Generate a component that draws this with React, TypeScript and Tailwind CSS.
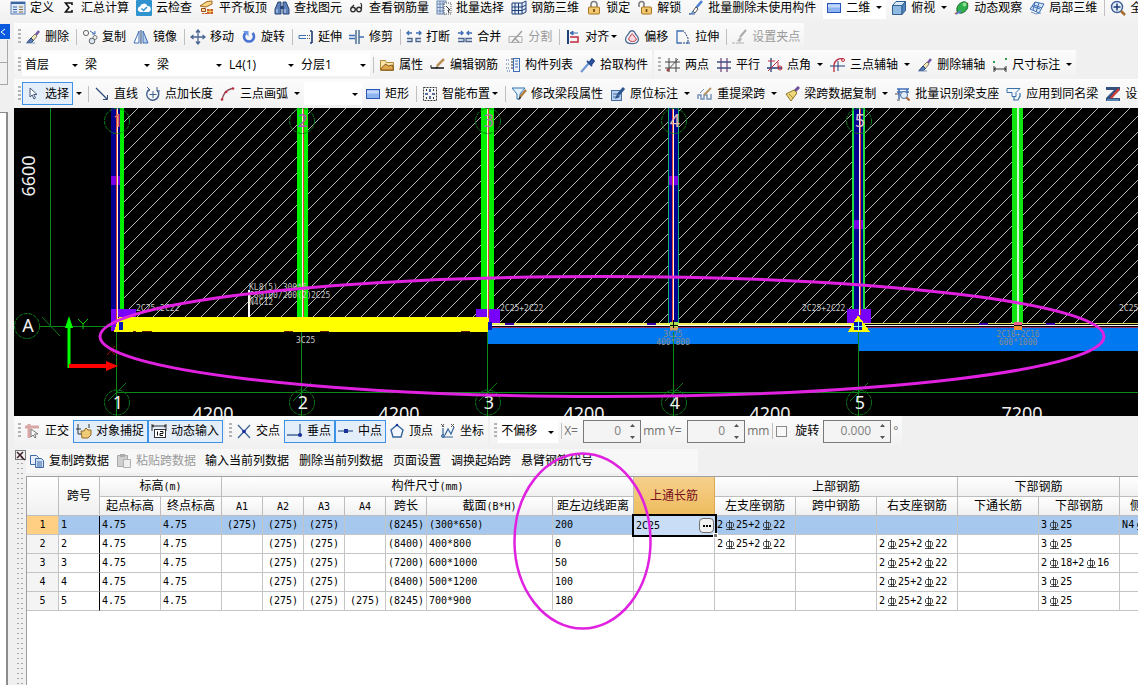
import type { ReactNode } from 'react'

const NAVY = '#1f3f77'
const BLUE = '#3f6fb5'
const RED = '#c0283c'

/* 16x16 toolbar drawings */
const icons = {
  define: (
    <>
      <rect x="1" y="2" width="14" height="12" fill="#dfe9f7" stroke="#5b7fb5" />
      <path d="M1 3h14" stroke="#3b64a5" strokeWidth="2" />
      <path d="M3 7h4M3 9.500h4M3 12h4" stroke="#3b64a5" />
      <path d="M9 7h4M9 9.500h4M9 12h4" stroke="#8a6a30" />
    </>
  ),
  sigma: <path d="M11 5V3H4.500L8 7.500 4.500 12H11v-2" stroke="#111" strokeWidth="1.600" />,
  cloud: (
    <>
      <rect width="16" height="16" rx="1" fill="#2f93cf" />
      <path d="M4 12a2.800 2.800 0 0 1 0-5.500A4 4 0 0 1 11.500 6 3 3 0 0 1 12 12z" fill="#fff" />
      <path d="m5.500 8.500 2 2L11 7" stroke="#2f93cf" strokeWidth="1.500" />
    </>
  ),
  roof: (
    <>
      <path d="M1 6 8 1.500 13 1v3L7 7z" fill="#f9d683" stroke="#a2671a" />
      <path d="M2.500 8.500h4v3h-4z" fill="#fbe3a8" stroke="#9a4a18" />
      <path d="M3 13h5V9h6v5H3z" fill="#c9602c" />
      <path d="M8 11.500h6M11 9v5M5.500 13v1" stroke="#f3c35c" />
    </>
  ),
  binoculars: (
    <>
      <path d="M4 2h3v12H1V9zM9 2h3l3 7v5H9z" fill="#5c80b8" stroke="#2a4777" />
      <path d="M6 6h4v3H6z" fill="#2a4777" />
      <path d="M3 9v4M11 9v4" stroke="#c9d9f2" />
    </>
  ),
  glasses: (
    <>
      <circle cx="4" cy="9.500" r="2.300" stroke="#333" strokeWidth="1.400" />
      <circle cx="10" cy="9.500" r="2.300" stroke="#333" strokeWidth="1.400" />
      <path d="M12.500 9V4.500L11.500 3M6.500 9H8M2 8l3-3" stroke="#333" strokeWidth="1.200" />
    </>
  ),
  batch: (
    <>
      <rect x="1" y="1" width="9" height="13" fill="#dbe6f6" stroke="#6b86b0" />
      <path d="M1 4h9M1 7.500h9M1 11h9M4 1v13M7 1v13" stroke="#6b86b0" />
      <path d="M8 3h7v11H8z" stroke="#555" strokeDasharray="1 1" fill="#f4f6fa" />
      <path d="m10 6 4 4h-2l1 3" stroke="#333" />
    </>
  ),
  grid3d: (
    <>
      <path d="M1 3h10l4-2v11l-4 2H1z" fill="#e3ecf8" stroke={NAVY} />
      <path d="M4 3v11M7.500 3v11M11 3v11M1 7h10l4-2M1 10.500h10l4-2" stroke={NAVY} />
    </>
  ),
  lock: (
    <>
      <path d="M5 7V4.500a3 3 0 0 1 6 0V7" stroke="#7f7f7f" strokeWidth="1.600" />
      <rect x="2.500" y="7" width="11" height="7" rx="1" fill="#f2c870" stroke="#a5741c" />
      <path d="M8 9v3" stroke="#6a4508" strokeWidth="1.600" />
    </>
  ),
  unlock: (
    <>
      <path d="M2 7V4a2.500 2.500 0 0 1 5 0v3" stroke="#7f7f7f" strokeWidth="1.600" />
      <rect x="4.500" y="7" width="10" height="7" rx="1" fill="#f2c870" stroke="#a5741c" />
      <path d="M9.500 9v3" stroke="#6a4508" strokeWidth="1.600" />
    </>
  ),
  brush: (
    <>
      <path d="m14 1-6 7" stroke="#4b7fd0" strokeWidth="2.500" />
      <path d="m8 7-3 4 2 2 3-4z" fill="#fff" stroke="#555" />
      <path d="M5 11c-1 2-2 3-4 3h6" fill="#8fb2e0" stroke="#3d66a8" />
    </>
  ),
  rect: (
    <>
      <rect x="1.500" y="3.500" width="13" height="9" fill="#8fb4f2" stroke="#2a55b8" />
      <path d="M2 6h12" stroke="#c4d8fb" strokeWidth="3" />
    </>
  ),
  cube: (
    <>
      <path d="M1.500 5.500 5 1.500h9.500L11 5.500z" fill="#d7eafa" stroke="#31608f" />
      <path d="M1.500 5.500H11v9H1.500z" fill="#8fbbe2" stroke="#31608f" />
      <path d="m11 5.500 3.500-4v9l-3.500 4z" fill="#4f86bb" stroke="#31608f" />
    </>
  ),
  orbit: (
    <>
      <path d="M1 14 14 3" stroke="#c7501e" strokeWidth="1.500" />
      <path d="M3 11C2 7 5 3 9 2s6 3 4 7-8 6-10 2z" fill="#2fae4c" stroke="#15682a" />
      <circle cx="10.500" cy="4.500" r="2" fill="#8be08f" />
      <path d="m2 14 5-3" stroke="#5b7fd0" strokeWidth="2" />
    </>
  ),
  local3d: (
    <>
      <path d="m1 9 5-7 9 2-5 9z" fill="#d4e5f6" stroke={BLUE} />
      <path d="m3 6 8 3M6 2l-2 8M10 3l-3 9M13 8 5 5" stroke={BLUE} />
      <path d="m2 12 5 2 5-1" stroke="#7394bd" />
    </>
  ),
  zoomAll: (
    <>
      <circle cx="7" cy="7" r="5.500" fill="#e5effb" stroke="#3f5f95" strokeWidth="1.400" />
      <path d="M7 3.500v7M3.500 7h7" stroke={NAVY} strokeWidth="1.500" />
      <path d="m11 11 4 4" stroke="#a36a2a" strokeWidth="2.500" />
    </>
  ),
  eraser: (
    <>
      <path d="m14 2-4 5" stroke="#7557a8" strokeWidth="2.600" />
      <path d="m10 5-4 4 2.500 2.500L12 7z" fill="#f4e9b0" stroke="#777" />
      <path d="M2 13.500 6 9l2.500 2.500-2 2z" fill="#5a7cb8" stroke="#26406e" />
      <path d="M1 14h9" stroke="#7b95bd" />
    </>
  ),
  copy: (
    <>
      <circle cx="4" cy="4" r="2.600" stroke="#666" />
      <circle cx="10" cy="12" r="2.800" fill="#dbe7f7" stroke="#666" />
      <circle cx="13" cy="8.500" r="2" stroke="#777" />
      <path d="m8 2 5 3m0 0V2m0 3h-3" stroke={BLUE} />
    </>
  ),
  mirror: (
    <>
      <path d="M6 2v12H1z" fill="#fff" stroke={BLUE} />
      <path d="M10 2v12h5z" fill="#b9d0ef" stroke={BLUE} />
      <path d="M8 1v14" stroke={NAVY} />
    </>
  ),
  move: (
    <path
      d="M8 1v14M1 8h14M6 3.500 8 1l2 2.500M6 12.500 8 15l2-2.500M3.500 6 1 8l2.500 2M12.500 6 15 8l-2.500 2"
      stroke="#4a6690"
      strokeWidth="1.300"
    />
  ),
  rotate: (
    <>
      <path d="M4.500 4a5 5 0 1 0 7 0" stroke="#4a72d0" strokeWidth="2.600" />
      <path d="M2 2h5.500v5.500z" fill="#6d95e8" />
    </>
  ),
  extend: (
    <>
      <path d="M1 6.500h7M1 9.500h7M1 6.500v3" stroke={BLUE} />
      <path d="M9 6.500h3M9 9.500h3" stroke="#555" strokeDasharray="1 1" />
      <path d="M14 2v12M12 2h2M12 14h2" stroke={NAVY} strokeWidth="1.600" />
    </>
  ),
  trim: (
    <>
      <path d="M0 6.500h6M0 9.500h6M10 8h5" stroke={BLUE} strokeWidth="1.300" />
      <path d="M7 1v14M10 1v14" stroke="#4c7094" strokeWidth="1.500" />
    </>
  ),
  break: (
    <>
      <path d="M1 4h5M10 4h5M3 2 1 4l2 2M13 2l2 2-2 2" stroke={BLUE} strokeWidth="1.400" />
      <path d="M1 9.500h5v3H1M15 9.500h-5v3h5" stroke="#47658f" strokeWidth="1.300" />
    </>
  ),
  merge: (
    <>
      <path d="M1 4h5M10 4h5M4 2l2 2-2 2M12 2l-2 2 2 2" stroke={BLUE} strokeWidth="1.400" />
      <path d="M1 9.500h6v3H1M15 9.500H9v3h6" stroke="#47658f" strokeWidth="1.300" />
    </>
  ),
  split: (
    <>
      <path d="M1 7.500h13v6H1z" stroke="#b0b0b0" />
      <path d="M4 13 14 2M6 9l5 4" stroke="#a0a0a0" strokeWidth="1.500" />
    </>
  ),
  align: (
    <>
      <path d="M3 1v14" stroke={NAVY} strokeWidth="2" />
      <path d="M5 4h8M5 4l3-2v4z" fill={BLUE} stroke={BLUE} />
      <path d="M5 8h8v5H5" stroke={RED} strokeWidth="1.500" />
    </>
  ),
  offset: (
    <>
      <path d="M2 12C0 8 4 7 5 4s5-3 6 0 5 4 3 8-11 3-12 0z" stroke="#4b6a94" strokeWidth="1.300" />
      <path d="M5 11c-1-2 1-3 2-5s2-1 3 1 3 2 2 4-6 2-7 0z" fill="#f7d8dc" stroke={RED} />
    </>
  ),
  stretch: (
    <>
      <path d="M7 2H2v12h4" stroke={BLUE} strokeWidth="1.300" />
      <path d="M7 2h2l4 7v5H6" stroke={NAVY} strokeDasharray="2 1" />
      <path d="M11 14h4" stroke={BLUE} strokeWidth="1.300" />
    </>
  ),
  gripPoint: (
    <>
      <path d="M14 1 8 8" stroke="#aaa" strokeWidth="2" />
      <path d="m8 8-3 4 3 1 2-3z" fill="#b5b5b5" />
      <path d="M0 14h3M4 14h8" stroke="#b0b0b0" />
    </>
  ),
  props: (
    <>
      <path d="M1.500 3.500h5l1 2h7v8h-13z" fill="#f7e3a5" stroke="#b08a3a" />
      <path d="m1.500 12 5-5 3 2 4-1 1 5h-11z" fill="#e2a94c" stroke="#80551c" />
    </>
  ),
  editRebar: (
    <>
      <path d="M1 11h13" stroke="#222" strokeWidth="1.600" />
      <path d="M1 8v3" stroke="#222" />
      <path d="m14 2-7 7" stroke="#b9935a" strokeWidth="2.500" />
      <path d="m7 9-2 3 3-1z" fill="#222" />
    </>
  ),
  list: (
    <>
      <path d="M1 3h3M1 7h3M1 11h3M2 14h3" stroke={BLUE} strokeDasharray="1 1" />
      <path d="M6 2h2M6 5h2M6 8h2M6 11h2" stroke="#333" />
      <rect x="8.500" y="1.500" width="6" height="13" fill="#eef3fb" stroke={BLUE} />
      <path d="M10 4h3M10 7h3M10 10h3" stroke={BLUE} />
    </>
  ),
  pick: (
    <>
      <path d="m9 6-7 8-1 1" stroke="#6f97d5" strokeWidth="2.200" />
      <path d="m7 4 5 5M9 6l3-4 2 2-3 4z" fill="#2f5cab" stroke="#234a90" strokeWidth="1.800" />
    </>
  ),
  twoPoint: (
    <>
      <path d="M4 1v14M11 1v14M0 5h15M0 11h15" stroke="#444" />
      <path d="M2 14 13 2" stroke="#555" />
      <circle cx="3" cy="13" r="1.500" fill="#9c4040" />
    </>
  ),
  parallel: (
    <>
      <path d="M5 1v14M11 1v14" stroke="#7a4d80" strokeWidth="1.300" />
      <path d="M1 5h14M1 11h14" stroke="#3f4f80" strokeWidth="1.300" />
    </>
  ),
  pointAngle: (
    <>
      <path d="M4 1v14M0 11h15" stroke={NAVY} strokeWidth="1.300" />
      <path d="M1 14 12 3M1 4h7" stroke={RED} />
      <path d="M11 5v6" stroke={RED} />
      <circle cx="13" cy="11" r="2" stroke={RED} />
    </>
  ),
  arcAux: (
    <>
      <path d="M4 15V8a7 7 0 0 1 9-6" stroke={RED} strokeWidth="1.300" />
      <path d="M0 9h15M8 4v10" stroke={NAVY} />
      <circle cx="13" cy="3" r="1.500" stroke={RED} />
    </>
  ),
  dim: (
    <>
      <path d="M2 9v6M14 9v6M2 12h12M4 10.500 2 12l2 1.500M12 10.500l2 1.500-2 1.500" stroke="#333" />
      <path d="M1 5h2M13 2h2" stroke="#2d9a45" strokeWidth="2" />
    </>
  ),
  cursor: <path d="M5 2v9l2.200-2 1.800 4 1.500-1-1.800-3.500H12z" fill="#fff" stroke="#44597a" />,
  line: (
    <>
      <path d="m2 2 11 11" stroke="#2d4c7a" strokeWidth="1.300" />
      <path d="M13.500 13.500V9M13.500 13.500H9" stroke="#2d4c7a" />
    </>
  ),
  pointLen: (
    <>
      <path d="M4 3.500a6 6 0 1 0 8 .5" stroke="#3f5e8c" strokeWidth="1.400" />
      <path d="M8 5v7M4.500 8.500h7M2 1l3 3-3 2M12 1v4h3" stroke="#3f5e8c" />
    </>
  ),
  arc: (
    <>
      <path d="M2 14C3 8 6 4 12 2.500" stroke="#8b4a55" strokeWidth="1.300" />
      <circle cx="2" cy="13.500" r="1.300" fill={RED} />
      <circle cx="6" cy="6" r="1.300" fill={RED} />
      <circle cx="13" cy="2.500" r="1.300" fill={RED} />
    </>
  ),
  smart: (
    <>
      <rect x="1.500" y="1.500" width="13" height="13" stroke="#333" strokeDasharray="2 1" />
      <path d="M8 3v3M8 10v3M3 8h3M10 8h3" stroke={NAVY} strokeWidth="1.500" />
      <path d="M4 4h1M11 4h1M4 12h1M11 12h1" stroke="#333" strokeWidth="2" />
    </>
  ),
  modify: (
    <>
      <path d="M1 2h13l-5 6v5H6V8z" fill="#e2f0fb" stroke="#2f74b5" />
      <path d="m15 4-6 7" stroke="#b07a35" strokeWidth="2.300" />
      <path d="m9 10-2 4 3-2z" fill="#222" />
    </>
  ),
  situ: (
    <>
      <rect x="1.500" y="4.500" width="10" height="10" fill="#b9d0ee" stroke="#446c9f" />
      <path d="M3 8h4M3 11h3" stroke="#446c9f" />
      <path d="m14 2-6 7" stroke="#2c5590" strokeWidth="3" />
      <path d="m7 8-2 5 5-2z" fill="#2c5590" />
    </>
  ),
  respan: (
    <>
      <path d="M1 13V9h3v4h3V9h3v4h4V8" stroke="#7291b8" strokeWidth="1.400" />
      <path d="m14 2-7 7" stroke="#b79466" strokeWidth="2" />
      <path d="m3 7 4-4" stroke="#7291b8" />
    </>
  ),
  sweep: (
    <>
      <path d="m15 1-5 5" stroke="#6d4f9a" strokeWidth="3" />
      <path d="m10 4-8 4 5 7 6-8z" fill="#ecd67a" stroke="#8d7524" />
      <path d="m5 8 4 4" stroke="#a98d34" />
    </>
  ),
  identify: (
    <>
      <path d="M2 3h12M2 6h12M4 3v10M12 3v4" stroke={BLUE} strokeWidth="1.500" />
      <circle cx="9" cy="9" r="3.500" fill="#e3eefb" stroke="#46709f" />
      <path d="m11.500 11.500 3 3" stroke="#a7622d" strokeWidth="2" />
      <path d="M0 8h4M2 14h3" stroke="#555" />
    </>
  ),
  apply: (
    <>
      <path d="M1 2.500h13l-4 4v4H6v-4H1z" fill="#f4f8fd" stroke="#3a70a8" />
      <path d="M8 11v3h4l2-4M14 7v4" stroke="#3a70a8" strokeWidth="1.200" />
    </>
  ),
  settings: (
    <>
      <path d="M1 1h14v3L6 12h9v3H1v-3l8-8H1z" fill="#34507c" />
      <path d="m14 3-8 9" stroke="#d23b35" strokeWidth="2.200" />
      <path d="M2 14h12" stroke="#7db7e5" />
    </>
  ),
  ortho: (
    <>
      <path d="M4 1v14M0 4h14" stroke="#d9a6a6" strokeWidth="3" />
      <path d="M6 6v8l2-2 2 3 1-1-1.500-3H13z" fill="#fff" stroke="#777" />
    </>
  ),
  snap: (
    <>
      <path d="M2 1v10M0 6h5M2 11h3M13 1v4" stroke="#333" />
      <path d="M5 8h3l2-3 2 2h3v5l-3 3H6z" fill="#efcb78" stroke="#8f6a20" />
    </>
  ),
  dynamic: (
    <>
      <path d="M1 1v7M15 1v7M1 3h14M3 2 1 3l2 1M13 2l2 1-2 1" stroke="#333" />
      <rect x="3.500" y="6.500" width="11" height="8" fill="#fff" stroke="#333" />
      <path d="M6.500 8.500v4M9 8.500h3v2H9v2h3" stroke="#111" />
    </>
  ),
  cross: (
    <>
      <path d="m2 2 12 13M14 2 2 15" stroke="#3f6796" strokeWidth="1.300" />
      <circle cx="8" cy="8.500" r="1.800" fill="#1d2f9c" />
    </>
  ),
  perp: (
    <>
      <path d="M13 1v11M0 12h15" stroke="#3f6796" strokeWidth="1.300" />
      <circle cx="13" cy="12" r="2" fill="#1d2f9c" />
    </>
  ),
  mid: (
    <>
      <path d="M0 8h15" stroke="#3f6796" strokeWidth="1.300" />
      <rect x="6" y="6" width="4" height="4" fill="#1d2f9c" />
    </>
  ),
  vertex: (
    <>
      <path d="m8 2 6 5-2 7H4L2 7z" fill="#f5f9ff" stroke="#35659c" strokeWidth="1.400" />
      <circle cx="8" cy="2" r="1.200" fill="#1d2f9c" />
    </>
  ),
  coord: (
    <>
      <path d="M3 5v9h10M5 12l3-6 3 5 3-7" stroke="#35659c" strokeWidth="1.200" />
      <path d="m1 1 3 3M4 1 2 4M11 1l3 3M14 1l-3 3" stroke="#555" />
      <circle cx="3" cy="13" r="1.500" stroke="#35659c" />
    </>
  ),
  copyDoc: (
    <>
      <path d="M1.500 2.500h6l2 2v7h-8z" fill="#e8f0fb" stroke="#3e68a8" />
      <path d="M6.500 5.500h6l2 2v7h-8z" fill="#cfe0f6" stroke="#3e68a8" />
      <path d="M8 9h5M8 11h5M8 13h5" stroke="#3e68a8" />
    </>
  ),
  pasteDoc: (
    <>
      <path d="M1.500 2.500h10v11h-10z" fill="#cfcfcf" stroke="#aaa" />
      <path d="M4 1h5v3H4z" fill="#aaa" />
      <path d="M7.500 6.500h7v8h-7z" fill="#eee" stroke="#b0b0b0" />
    </>
  ),
}

type IconName = keyof typeof icons

function Icon({ name }: { name: IconName }) {
  return (
    <svg className="size-4 shrink-0" viewBox="0 0 16 16" fill="none" aria-hidden="true">
      {icons[name]}
    </svg>
  )
}

function Caret({ className }: { className?: string }) {
  return (
    <svg className={`h-[3px] w-[6px] shrink-0 ${className ?? ''}`} viewBox="0 0 6 3" aria-hidden="true">
      <path d="M0 0h6L3 3z" fill="#000" />
    </svg>
  )
}

type ToolProps = {
  icon: IconName
  label: string
  menu?: 'wide' | 'tight'
  pressed?: boolean
  disabled?: boolean
}

function Tool({ icon, label, menu, pressed, disabled }: ToolProps) {
  return (
    <button
      type="button"
      disabled={disabled}
      aria-pressed={pressed}
      className={`flex h-[23px] shrink-0 items-center border pl-[2px] pr-[3px] ${
        pressed ? 'border-[#3c92e6] bg-[#e4eefa]' : 'border-transparent'
      } ${disabled ? 'text-[#9a9a9a]' : 'text-black'}`}
    >
      <Icon name={icon} />
      <span className="ml-1">{label}</span>
      {menu === 'wide' && <Caret className="ml-[6px]" />}
      {menu === 'tight' && <Caret className="ml-[2px]" />}
    </button>
  )
}

function Sep() {
  return <div className="ml-[3px] mr-[2px] h-4 w-px shrink-0 bg-[#c0c0c0]" />
}

function Grip() {
  return (
    <div className="mr-px h-4 w-[3px] shrink-0 bg-[linear-gradient(#b4b4b4_50%,transparent_50%)] bg-size-[3px_4px]" />
  )
}

function Strip({ children, className }: { children: ReactNode; className?: string }) {
  return (
    <div
      role="toolbar"
      className={`flex h-full shrink-0 items-center bg-linear-to-b from-[#fcfcfc] to-[#f1f1f1] pl-1 ${className ?? ''}`}
    >
      {children}
    </div>
  )
}

function Combo({ label, value, className }: { label: string; value: string; className: string }) {
  return (
    <div className={`relative h-[23px] shrink-0 bg-white ${className}`}>
      <select aria-label={label} className="h-full w-full appearance-none bg-transparent pl-[3px] outline-none">
        <option>{value}</option>
      </select>
      <Caret className="pointer-events-none absolute right-1 top-[11px]" />
    </div>
  )
}

function Spin({ id, value, className }: { id: string; value: string; className: string }) {
  return (
    <div className={`flex h-[23px] shrink-0 items-center border border-[#7a7a7a] bg-[#f4f4f4] ${className}`}>
      <input id={id} defaultValue={value} disabled className="w-0 flex-1 text-right text-[#808080]" />
      <svg className="ml-2 mr-1 h-[15px] w-[7px] shrink-0" viewBox="0 0 7 15" aria-hidden="true">
        <path d="M1 3h5L3.500 0zM1 12h5l-2.500 3z" fill="#555" />
      </svg>
    </div>
  )
}

const axes = [
  { x: 117, name: '1', topColor: '#e06a5a' },
  { x: 302, name: '2', topColor: '#a060b0' },
  { x: 488, name: '3', topColor: '#b078a0' },
  { x: 674, name: '4', topColor: '#e8b8b0' },
  { x: 859, name: '5', topColor: '#d8c0d8' },
]

const bays = [
  [124, 297],
  [308, 481],
  [494, 669],
  [678, 852],
  [865, 1012],
  [1023, 2400],
]

const HATCH_STEP = 16

function Drawing() {
  const hatch = Array.from({ length: 150 }, (_, i) => 246 + i * HATCH_STEP)

  return (
    <svg className="block h-[308px] w-full bg-black" role="img" aria-label="梁平面图">
      <defs>
        <clipPath id="bays">
          {bays.map(([a, b]) => (
            <rect key={a} x={a} y="108" width={b - a} height="215" />
          ))}
        </clipPath>
      </defs>
      <g transform="translate(-14 -108)" fill="none">
        {/* slab hatch */}
        <g clipPath="url(#bays)" stroke="#b8b8b8" shapeRendering="crispEdges">
          {hatch.map((c) => (
            <line key={c} x1={c - 108} y1="108" x2={c - 330} y2="330" />
          ))}
        </g>

        <g shapeRendering="crispEdges">
          {/* vertical beams */}
          <rect x="111" y="108" width="9" height="202" fill="#000090" />
          <rect x="120" y="108" width="4" height="201" fill="#00f000" />
          <rect x="111" y="176" width="9" height="9" fill="#7800e8" />
          <rect x="297" y="108" width="11" height="210" fill="#00f000" />
          <rect x="481" y="108" width="13" height="202" fill="#00f000" />
          <rect x="668" y="108" width="11" height="215" fill="#18b070" />
          <rect x="669" y="108" width="9" height="215" fill="#000090" />
          <rect x="669" y="176" width="9" height="9" fill="#7800e8" />
          <rect x="852" y="108" width="13" height="202" fill="#20e040" />
          <rect x="854" y="108" width="9" height="202" fill="#000090" />
          <rect x="854" y="220" width="9" height="9" fill="#7800e8" />
          <rect x="1012" y="108" width="11" height="215" fill="#10e410" />
          <rect x="1017" y="108" width="2" height="215" fill="#c8f8c8" />

          {/* supports */}
          <path d="M111 309h25v8h-20v14h-5zM476 309h24v15h-24zM847 309h24v15h-24z" fill="#7800f8" />

          {/* span 1 highlighted */}
          <path d="M119 317h370v6l8 9H114z" fill="#ff0" />
          <path d="M133 331.500h3M142 331.500h10M284 331.500h9M320 331.500h9M461 331.500h9" stroke="#602000" />

          {/* remaining spans */}
          <rect x="488" y="328" width="370" height="16" fill="#0078f0" />
          <rect x="858" y="328" width="1500" height="23" fill="#0078f0" />
          <path d="M492 324h366" stroke="#f0f060" strokeWidth="2" />
          <path d="M858 323.500h1500" stroke="#e0e060" />
          <path d="M492 325.500h1866" stroke="#fff" />
          <path d="M492 327.500h1866" stroke="#a03060" />
          <path d="M505 324h9M647 324h9M979 324h9M1046 324h9" stroke="#3800a0" strokeWidth="2" />

          {/* beam centre lines */}
          <path d="M116.500 108v216M303.500 108v209M488.500 108v210M672.500 108v215M860.500 108v207" stroke="#e04030" />
          <path d="M117.500 108v216M302.500 108v209M487.500 108v210M673.500 108v215M859.500 108v207" stroke="#fff4e0" />

          {/* axis lines */}
          <g stroke="#0b8a1a">
            <path d="M50.500 108v218M40 326.500h72M117 392.500h2300" />
            {axes.map((a) => (
              <path key={a.name} d={`M${a.x - 0.5} 332V416`} />
            ))}
          </g>
        </g>

        <g stroke="#0b7a1a">
          <path d="M42 317 60 336" />
          {axes.map((a) => (
            <g key={a.name}>
              <path d={`M${a.x - 9} 401 ${a.x + 9} 383`} />
              <circle cx={a.x} cy="121" r="12.500" strokeDasharray="4 1" />
              <circle cx={a.x} cy="402.500" r="12.500" strokeDasharray="4 1" />
            </g>
          ))}
          <circle cx="27" cy="326" r="12.500" strokeDasharray="4 1" />
        </g>

        {/* joints */}
        <g shapeRendering="crispEdges">
          <rect x="119" y="322" width="4" height="8" fill="#0018b8" />
          <rect x="488" y="322" width="4" height="8" fill="#0018b8" />
          <path d="m858 315 12 17h-22z" fill="#ff0" />
          <rect x="854" y="322" width="8" height="8" fill="#0018b8" />
          <path d="M858.500 321v10M853 326.500h10" stroke="#7ff" />
          <rect x="670" y="322" width="8" height="5" fill="#a8e050" />
          <rect x="670" y="327" width="8" height="3" fill="#d8a060" />
          <path d="M673.500 320v8M670 325.500h8" stroke="#000" />
          <rect x="1014" y="322" width="8" height="3" fill="#f06090" />
          <rect x="1014" y="325" width="8" height="5" fill="#e89030" />
          <path d="M1014 325.500h8" stroke="#000" />
          <rect x="248" y="290" width="2" height="27" fill="#fff" />
        </g>

        {/* UCS */}
        <path d="M69 368v-42" stroke="#0f0" strokeWidth="3" />
        <path d="m69 316 4 12h-8z" fill="#0f0" />
        <path d="M69 366h39" stroke="#f00" strokeWidth="4" />
        <path d="m118 366-12-5v10z" fill="#f00" />
        <path d="m78 319 5 5 5-5M83 324v5" stroke="#0c0" />
        <path d="m107 346 8 9M115 346l-8 9" stroke="#a01010" />

        <g className="font-['DejaVu_Sans_Mono',monospace] text-[8px]" fill="#c8c8c8">
          <text x="249" y="290">KL8(5) 300*6</text>
          <text x="249" y="298">C8@100/200(2)</text>
          <text x="311" y="298">2C25</text>
          <text x="249" y="305">N4C12</text>
          <text x="136" y="311">2C25+2C22</text>
          <text x="500" y="311">2C25+2C22</text>
          <text x="802" y="311">2C25+2C22</text>
          <text x="1119" y="311">2C25+2C22</text>
          <text x="296" y="343">3C25</text>
          <g fill="#8c8c88" textAnchor="middle">
            <text x="673" y="337">3C25</text>
            <text x="673" y="345">400*800</text>
            <text x="1018" y="337">2C18+2C16</text>
            <text x="1018" y="345">600*1000</text>
          </g>
        </g>

        <g className="font-['Noto_Sans',sans-serif] text-[18px]" fill="#f0f0f0" textAnchor="middle">
          <text x="28" y="332">A</text>
          <text transform="translate(35 176) rotate(-90)">6600</text>
          {axes.map((a) => (
            <g key={a.name}>
              <text x={a.x + 1} y="127" fill={a.topColor}>
                {a.name}
              </text>
              <text x={a.x + 1} y="409">
                {a.name}
              </text>
            </g>
          ))}
          <text x="213" y="420">4200</text>
          <text x="399" y="420">4200</text>
          <text x="584" y="420">4200</text>
          <text x="770" y="420">4200</text>
          <text x="1022" y="420">7200</text>
        </g>

        <ellipse cx="602" cy="336.500" rx="502" ry="60" stroke="#e022e0" strokeWidth="3" />
      </g>
    </svg>
  )
}

const rows = [
  { a1: '(275)', a2: '(275)', a3: '(275)', a4: '', len: '(8245)', sec: '(300*650)', dist: '200', top: '2C25', left: '2C25+2C22', right: '', bottom: '3C25', side: 'N4C12' },
  { a1: '', a2: '(275)', a3: '(275)', a4: '', len: '(8400)', sec: '400*800', dist: '0', top: '', left: '2C25+2C22', right: '2C25+2C22', bottom: '3C25', side: '' },
  { a1: '', a2: '(275)', a3: '(275)', a4: '', len: '(7200)', sec: '600*1000', dist: '50', top: '', left: '', right: '2C25+2C22', bottom: '2C18+2C16', side: '' },
  { a1: '', a2: '(275)', a3: '(275)', a4: '', len: '(8400)', sec: '500*1200', dist: '100', top: '', left: '', right: '2C25+2C22', bottom: '3C25', side: '' },
  { a1: '', a2: '(275)', a3: '(275)', a4: '(275)', len: '(8245)', sec: '700*900', dist: '180', top: '', left: '', right: '2C25+2C22', bottom: '3C25', side: '' },
]

/* C in a rebar spec is shown as the HRB400 grade sign */
function Rebar({ spec }: { spec: string }) {
  return (
    <span className="inline-flex items-center whitespace-nowrap">
      {spec.split('C').map((part, i) => (
        <span key={i} className="inline-flex items-center">
          {i > 0 && (
            <svg className="ml-px h-[11px] w-3" viewBox="0 0 12 11" fill="none" stroke="#222" aria-label="C">
              <path d="M4 2.500h4.500l1 1v3l-1 1h-5l-1-1v-3l1-1zM5.500 0v10M7.500 2.500v7.500M2 9.500h9" strokeWidth=".8" />
            </svg>
          )}
          {part}
        </span>
      ))}
    </span>
  )
}

const headCell = 'border-b border-r border-[#bdbdbd] bg-linear-to-b from-white to-[#f0f0f0] p-0 font-normal'

function Th({ children, className, ...rest }: { children?: ReactNode; className?: string; colSpan?: number; rowSpan?: number }) {
  return (
    <th {...rest} className={`${headCell} ${className ?? ''}`}>
      {children}
    </th>
  )
}

function Num({ children }: { children: ReactNode }) {
  return <span className="font-['DejaVu_Sans_Mono',monospace] text-[10px]">{children}</span>
}

function SpanTable() {
  return (
    <table className="w-[1174px] table-fixed border-separate border-spacing-0">
      <colgroup>
        <col className="w-[32px]" />
        <col className="w-[41px]" />
        <col className="w-[61px]" />
        <col className="w-[61px]" />
        <col className="w-[41px]" />
        <col className="w-[41px]" />
        <col className="w-[41px]" />
        <col className="w-[41px]" />
        <col className="w-[41px]" />
        <col className="w-[126px]" />
        <col className="w-[81px]" span={8} />
      </colgroup>
      <thead>
        <tr className="h-[20px]">
          <Th rowSpan={2} />
          <Th rowSpan={2}>跨号</Th>
          <Th colSpan={2}>标高<Num>(m)</Num></Th>
          <Th colSpan={7}>构件尺寸<Num>(mm)</Num></Th>
          <th rowSpan={2} className="border-b border-r border-[#d9a850] bg-linear-to-b from-[#f5d08c] to-[#eebc5c] p-0 font-normal text-[#7a1020]">
            上通长筋
          </th>
          <Th colSpan={3}>上部钢筋</Th>
          <Th colSpan={2}>下部钢筋</Th>
          <Th />
        </tr>
        <tr className="h-[19px]">
          <Th>起点标高</Th>
          <Th>终点标高</Th>
          <Th><Num>A1</Num></Th>
          <Th><Num>A2</Num></Th>
          <Th><Num>A3</Num></Th>
          <Th><Num>A4</Num></Th>
          <Th>跨长</Th>
          <Th>截面<Num>(B*H)</Num></Th>
          <Th>距左边线距离</Th>
          <Th>左支座钢筋</Th>
          <Th>跨中钢筋</Th>
          <Th>右支座钢筋</Th>
          <Th>下通长筋</Th>
          <Th>下部钢筋</Th>
          <Th className="whitespace-nowrap">侧面通长筋</Th>
        </tr>
      </thead>
      <tbody className="font-['DejaVu_Sans_Mono',monospace] text-[10px]">
        {rows.map((row, i) => {
          const cell = 'border-b border-r border-[#c4c4c4] px-[2px] py-0'
          return (
            <tr key={i} className={`h-[19px] ${i === 0 ? 'bg-[#a6c8ee]' : 'bg-white'}`}>
              <th className={`border-b border-r border-[#c4c4c4] p-0 font-normal ${i === 0 ? 'bg-[#ffcf84]' : 'bg-[#f4f4f4]'}`}>
                {i + 1}
              </th>
              <td className="border-b border-r border-b-[#c4c4c4] border-r-black px-[2px] py-0">{i + 1}</td>
              <td className={cell}>4.75</td>
              <td className={cell}>4.75</td>
              <td className={`${cell} text-center`}>{row.a1}</td>
              <td className={`${cell} text-center`}>{row.a2}</td>
              <td className={`${cell} text-center`}>{row.a3}</td>
              <td className={`${cell} text-center`}>{row.a4}</td>
              <td className={`${cell} text-center`}>{row.len}</td>
              <td className={cell}>{row.sec}</td>
              <td className={cell}>{row.dist}</td>
              {i === 0 ? (
                <td className="relative bg-[#c9ddf6] p-0 outline-2 outline-black">
                  <div className="flex h-[18px] items-center">
                    <input aria-label="上通长筋" defaultValue={row.top} className="w-0 flex-1 pl-[2px] outline-none" />
                    <button type="button" aria-label="更多" className="mr-px flex h-[15px] w-[15px] items-center justify-center gap-px rounded-sm border border-[#707070] bg-[#f2f2f2]">
                      <span className="size-[2px] bg-black" />
                      <span className="size-[2px] bg-black" />
                      <span className="size-[2px] bg-black" />
                    </button>
                  </div>
                  <span className="absolute -bottom-[3px] -right-[3px] z-10 size-[5px] border border-white bg-[#777]" />
                </td>
              ) : (
                <td className={cell}>{row.top}</td>
              )}
              <td className={cell}><Rebar spec={row.left} /></td>
              <td className={cell} />
              <td className={cell}><Rebar spec={row.right} /></td>
              <td className={cell} />
              <td className={cell}><Rebar spec={row.bottom} /></td>
              <td className={cell}><Rebar spec={row.side} /></td>
            </tr>
          )
        })}
      </tbody>
    </table>
  )
}

const dockActions = ['输入当前列数据', '删除当前列数据', '页面设置', '调换起始跨', '悬臂钢筋代号']

export default function App() {
  return (
    <div className="flex h-screen flex-col overflow-hidden bg-[#f0f0f0] font-['Open_Sans','Noto_Sans_CJK_SC',sans-serif] text-xs leading-4 text-black">
      {/* Main toolbar */}
      <div className="flex h-[23px] shrink-0 items-center overflow-hidden bg-linear-to-b from-[#fafafa] to-[#f0f0f0] pb-2 pl-[7px]">
        <Tool icon="define" label="定义" />
        <Tool icon="sigma" label="汇总计算" />
        <Tool icon="cloud" label="云检查" />
        <Tool icon="roof" label="平齐板顶" />
        <Tool icon="binoculars" label="查找图元" />
        <Tool icon="glasses" label="查看钢筋量" />
        <Tool icon="batch" label="批量选择" />
        <Tool icon="grid3d" label="钢筋三维" />
        <Tool icon="lock" label="锁定" />
        <Tool icon="unlock" label="解锁" />
        <Tool icon="brush" label="批量删除未使用构件" />
        <div className="ml-[3px] mr-[2px] shrink-0 bg-white">
          <Tool icon="rect" label="二维" menu="wide" />
        </div>
        <Tool icon="cube" label="俯视" menu="wide" />
        <Tool icon="orbit" label="动态观察" />
        <Tool icon="local3d" label="局部三维" />
        <Sep />
        <Tool icon="zoomAll" label="全屏" />
      </div>

      <div className="flex min-h-0 flex-1">
        {/* Collapsed side panel */}
        <aside className="flex w-[14px] shrink-0 flex-col">
          <button type="button" aria-label="收起" className="mt-px flex h-[15px] w-[10px] items-center bg-[#0a5ae0]">
            <svg className="h-2 w-[6px]" viewBox="0 0 6 8" fill="none" aria-hidden="true">
              <path d="M5 1 1 4l4 3" stroke="#fff" />
            </svg>
          </button>
          <div className="mt-px h-[23px] w-2 border-b border-r border-[#a8a8a8]" />
          <div className="h-[22px] w-2 border-b border-r border-[#a8a8a8]" />
          <div className="h-[27px] w-2" />
          <div className="w-2 flex-1 border-r-2 border-t border-r-[#8c8c8c] border-t-[#8c8c8c] bg-white" />
        </aside>

        <main className="flex min-w-0 flex-1 flex-col overflow-hidden">
          <div className="flex h-[27px] shrink-0">
            <Strip>
              <Grip />
              <Tool icon="eraser" label="删除" />
              <Sep />
              <Tool icon="copy" label="复制" />
              <Tool icon="mirror" label="镜像" />
              <Sep />
              <Tool icon="move" label="移动" />
              <Tool icon="rotate" label="旋转" />
              <Sep />
              <Tool icon="extend" label="延伸" />
              <Tool icon="trim" label="修剪" />
              <Sep />
              <Tool icon="break" label="打断" />
              <Tool icon="merge" label="合并" />
              <Tool icon="split" label="分割" disabled />
              <Sep />
              <Tool icon="align" label="对齐" menu="tight" />
              <Tool icon="offset" label="偏移" />
              <Tool icon="stretch" label="拉伸" />
              <Sep />
              <Tool icon="gripPoint" label="设置夹点" disabled />
            </Strip>
          </div>

          <div className="flex h-[29px] shrink-0">
            <Strip>
              <Grip />
              <Combo label="楼层" value="首层" className="w-[60px]" />
              <Combo label="构件类型" value="梁" className="w-[72px]" />
              <Combo label="构件种类" value="梁" className="w-[72px]" />
              <Combo label="构件" value="L4(1)" className="w-[72px]" />
              <Combo label="分层" value="分层1" className="w-[72px]" />
              <Sep />
              <Tool icon="props" label="属性" />
              <Tool icon="editRebar" label="编辑钢筋" />
              <Tool icon="list" label="构件列表" />
              <Tool icon="pick" label="拾取构件" />
            </Strip>
            <Strip className="ml-[2px]">
              <Grip />
              <Tool icon="twoPoint" label="两点" />
              <Tool icon="parallel" label="平行" />
              <Tool icon="pointAngle" label="点角" menu="wide" />
              <Tool icon="arcAux" label="三点辅轴" menu="wide" />
              <Tool icon="eraser" label="删除辅轴" />
              <Tool icon="dim" label="尺寸标注" menu="wide" />
            </Strip>
          </div>

          <div className="flex h-[29px] shrink-0">
            <Strip>
              <Grip />
              <Tool icon="cursor" label="选择" pressed />
              <button type="button" aria-label="选择方式" className="flex h-[23px] w-3 shrink-0 items-center justify-center">
                <Caret />
              </button>
              <Sep />
              <Tool icon="line" label="直线" />
              <Tool icon="pointLen" label="点加长度" />
              <Tool icon="arc" label="三点画弧" menu="wide" />
              <Combo label="画法" value="" className="w-[58px]" />
              <Tool icon="rect" label="矩形" />
              <Sep />
              <Tool icon="smart" label="智能布置" menu="tight" />
              <Sep />
              <Tool icon="modify" label="修改梁段属性" />
              <Tool icon="situ" label="原位标注" menu="wide" />
              <Tool icon="respan" label="重提梁跨" menu="wide" />
              <Tool icon="sweep" label="梁跨数据复制" menu="wide" />
              <Tool icon="identify" label="批量识别梁支座" />
              <Tool icon="apply" label="应用到同名梁" />
              <Tool icon="settings" label="设置拱梁" />
            </Strip>
          </div>

          <div className="shrink-0">
            <Drawing />
          </div>

          {/* Snap bar */}
          <div className="flex h-[30px] shrink-0">
            <Strip>
              <Grip />
              <Tool icon="ortho" label="正交" />
              <Tool icon="snap" label="对象捕捉" pressed />
              <Tool icon="dynamic" label="动态输入" pressed />
            </Strip>
            <Strip className="ml-[2px]">
              <Grip />
              <Tool icon="cross" label="交点" />
              <Tool icon="perp" label="垂点" pressed />
              <Tool icon="mid" label="中点" pressed />
              <Tool icon="vertex" label="顶点" />
              <Tool icon="coord" label="坐标" />
            </Strip>
            <Strip className="ml-[2px] pr-1">
              <Grip />
              <Combo label="偏移方式" value="不偏移" className="w-[60px]" />
              <Sep />
              <label htmlFor="offset-x" className="w-[19px] text-[#707070]">X=</label>
              <Spin id="offset-x" value="0" className="w-[58px]" />
              <span className="w-6 pl-[2px] text-[#707070]">mm</span>
              <label htmlFor="offset-y" className="w-[22px] pl-[3px] text-[#707070]">Y=</label>
              <Spin id="offset-y" value="0" className="w-[58px]" />
              <span className="w-6 pl-[2px] text-[#707070]">mm</span>
              <Sep />
              <input
                id="rotate"
                type="checkbox"
                className="ml-px size-[11px] shrink-0 appearance-none border border-[#8a8a8a] bg-[#f8f8f8]"
              />
              <label htmlFor="rotate" className="ml-2 mr-1 shrink-0">旋转</label>
              <Spin id="angle" value="0.000" className="w-[68px]" />
              <label htmlFor="angle" className="ml-[2px] text-[#707070]">°</label>
            </Strip>
          </div>

          {/* Span data dock */}
          <section className="relative flex min-h-0 flex-1">
            <div className="flex w-3 shrink-0 flex-col items-start pt-1">
              <button type="button" aria-label="关闭" className="ml-px flex size-[11px] items-center justify-center">
                <svg className="size-[11px]" viewBox="0 0 11 11" fill="none" aria-hidden="true">
                  <rect x=".5" y=".5" width="10" height="9" stroke="#777" />
                  <path d="m2 2 6 6M8 2 2 8M6 7l4 3" stroke="#402028" strokeWidth="1.500" />
                </svg>
              </button>
              <div className="ml-[2px] w-2 flex-1 bg-[radial-gradient(circle,#a8a8a8_1px,transparent_1px)] bg-size-[4px_5px]" />
            </div>
            <div className="flex min-w-0 flex-1 flex-col">
              <div className="flex h-[30px] shrink-0 items-center">
                <div role="toolbar" className="flex h-6 items-center bg-[#f7f7f7] pr-25">
                  <Tool icon="copyDoc" label="复制跨数据" />
                  <Tool icon="pasteDoc" label="粘贴跨数据" disabled />
                  {dockActions.map((label) => (
                    <button key={label} type="button" className="shrink-0 px-[5px]">
                      {label}
                    </button>
                  ))}
                </div>
              </div>
              <div className="flex-1 overflow-hidden border-l border-t border-[#a0a0a0] bg-white">
                <SpanTable />
              </div>
            </div>
            <svg className="pointer-events-none absolute left-[499px] top-[5px] h-[180px] w-[140px]" viewBox="0 0 140 180" fill="none" aria-hidden="true">
              <ellipse cx="69.500" cy="90" rx="68" ry="87.500" stroke="#e022e0" strokeWidth="2.500" />
            </svg>
          </section>
        </main>
      </div>
    </div>
  )
}
